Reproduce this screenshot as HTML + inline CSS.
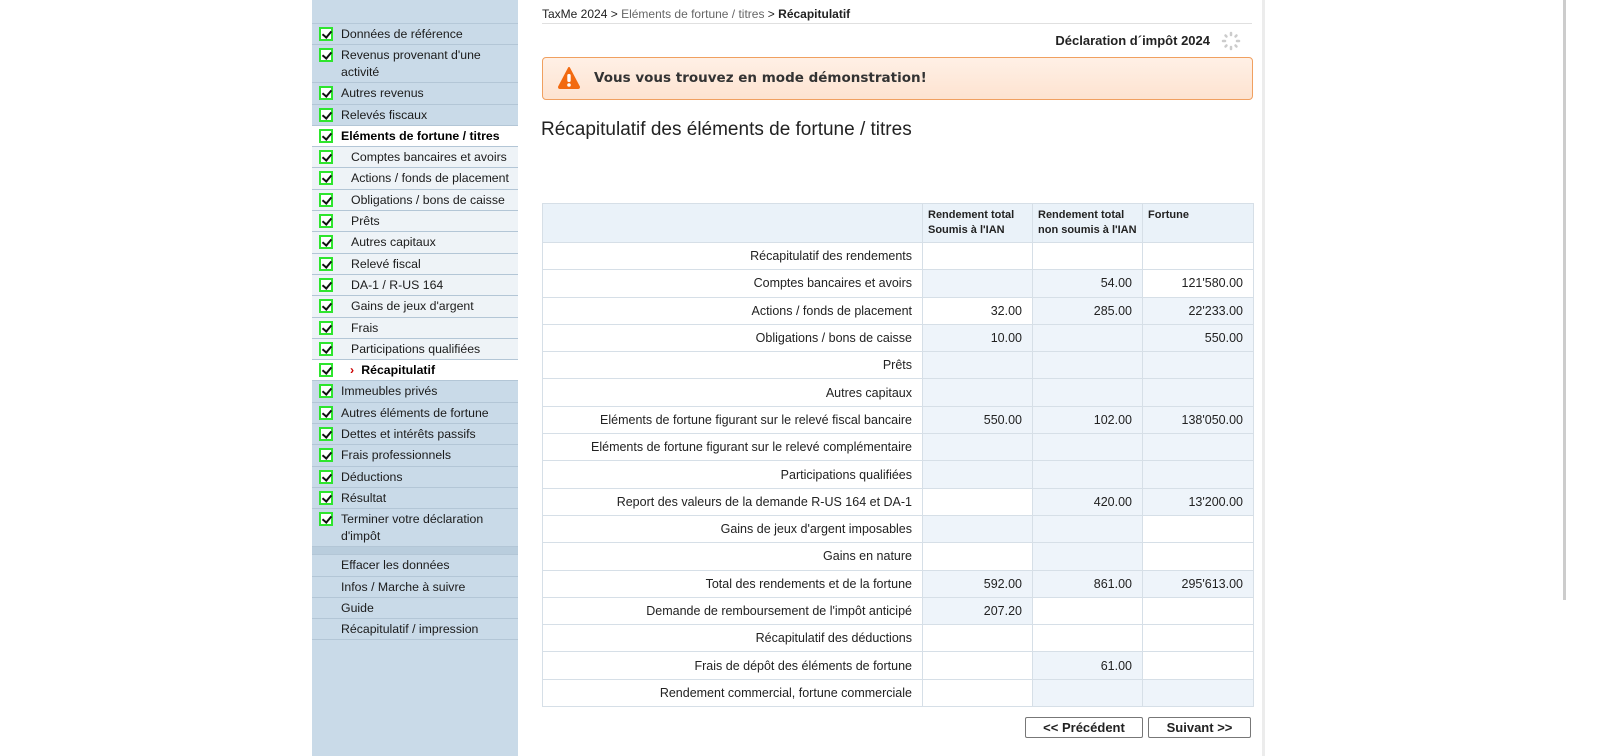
<!DOCTYPE html>
<html><head><meta charset="utf-8"><style>
*{box-sizing:border-box;margin:0;padding:0}
body{width:1600px;height:756px;overflow:hidden;background:#fff;font-family:"Liberation Sans",Arial,sans-serif;font-size:13px;color:#222;position:relative}
#side{position:absolute;left:312px;top:0;width:206px;height:756px;background:#c9dae8}
#side .top{height:24px;border-bottom:1px solid #b5c8d8}
.it{position:relative;height:21.3px;line-height:20px;border-bottom:1px solid #b3c6d6;padding-left:29px;font-size:12.3px;color:#1b1b1b;white-space:nowrap}
.it.two{height:38px;line-height:17px;padding-top:2px;white-space:normal}
.it.sel{background:#fff;font-weight:bold;color:#000}
.it.sub{background:#eef3f7;padding-left:39px}
.it.cur{background:#fff;padding-left:39px;font-weight:bold;color:#000}
.cb{position:absolute;left:7px;top:3px;width:14px;height:14px;border:2px solid #2ee52e;background:#fff}
.cb:after{content:"";position:absolute;left:3px;top:0px;width:4px;height:7px;border:solid #111;border-width:0 2px 2px 0;transform:rotate(40deg)}
.gap{height:8px;background:#b9cddd;border-bottom:1px solid #b3c6d6}
#shadow{position:absolute;left:1262px;top:0;width:3px;height:756px;background:#ececec}
#scroll{position:absolute;left:1563px;top:0;width:3px;height:600px;background:#ccc}
.crumb{position:absolute;left:542px;top:7px;font-size:12px;color:#222}
.crumb span{color:#666}
.line{position:absolute;left:542px;top:23px;width:710px;height:1px;background:#e0e0e0}
.decl{position:absolute;right:390px;top:33px;font-size:13px;font-weight:bold}
.warn{position:absolute;left:542px;top:57px;width:711px;height:43px;border:1px solid #f0a060;border-radius:4px;background:linear-gradient(#fff0e6,#fde3d0);}
.warn b{position:absolute;left:51px;top:12px;color:#333;font-family:"DejaVu Sans",sans-serif;font-size:13.5px}
h1{position:absolute;left:541px;top:119px;font-size:19px;font-weight:normal;color:#222}
table{position:absolute;left:542px;top:203px;border-collapse:collapse;width:711px;table-layout:fixed}
td{border:1px solid #d6dfe7;height:27.3px;padding:0 10px;text-align:right;font-size:12.5px}
tr.h td{height:38px;background:#eaf2f9;vertical-align:top;text-align:left;font-weight:bold;font-size:11px;padding:4px 5px;line-height:15px;white-space:nowrap;overflow:hidden}
.L{background:#eef4fa}
.btn{position:absolute;top:717px;height:21px;border:1px solid #777;border-radius:2px;background:#fff;font-weight:bold;text-align:center;line-height:19px;font-family:"Liberation Sans",sans-serif;font-size:13px}
</style></head><body>
<div id="side">
<div class="top"></div>
<div class="it"><i class="cb"></i>Données de référence</div>
<div class="it two"><i class="cb"></i>Revenus provenant d'une activité</div>
<div class="it"><i class="cb"></i>Autres revenus</div>
<div class="it"><i class="cb"></i>Relevés fiscaux</div>
<div class="it sel"><i class="cb"></i>Eléments de fortune / titres</div>
<div class="it sub"><i class="cb"></i>Comptes bancaires et avoirs</div>
<div class="it sub"><i class="cb"></i>Actions / fonds de placement</div>
<div class="it sub"><i class="cb"></i>Obligations / bons de caisse</div>
<div class="it sub"><i class="cb"></i>Prêts</div>
<div class="it sub"><i class="cb"></i>Autres capitaux</div>
<div class="it sub"><i class="cb"></i>Relevé fiscal</div>
<div class="it sub"><i class="cb"></i>DA-1 / R-US 164</div>
<div class="it sub"><i class="cb"></i>Gains de jeux d'argent</div>
<div class="it sub"><i class="cb"></i>Frais</div>
<div class="it sub"><i class="cb"></i>Participations qualifiées</div>
<div class="it cur"><i class="cb"></i><span style="color:#c00;position:absolute;left:38px">›</span>&nbsp;&nbsp; Récapitulatif</div>
<div class="it"><i class="cb"></i>Immeubles privés</div>
<div class="it"><i class="cb"></i>Autres éléments de fortune</div>
<div class="it"><i class="cb"></i>Dettes et intérêts passifs</div>
<div class="it"><i class="cb"></i>Frais professionnels</div>
<div class="it"><i class="cb"></i>Déductions</div>
<div class="it"><i class="cb"></i>Résultat</div>
<div class="it two"><i class="cb"></i>Terminer votre déclaration d'impôt</div>
<div class="gap"></div>
<div class="it">Effacer les données</div>
<div class="it">Infos / Marche à suivre</div>
<div class="it">Guide</div>
<div class="it">Récapitulatif / impression</div>
</div>
<div id="shadow"></div><div id="scroll"></div>
<div class="crumb">TaxMe 2024 &gt; <span>Eléments de fortune / titres</span> &gt; <b>Récapitulatif</b></div>
<div class="line"></div>
<div class="decl">Déclaration d´impôt 2024</div>
<svg style="position:absolute;left:1221px;top:31px" width="20" height="20" viewBox="0 0 20 20"><g stroke="#ccc" stroke-width="2.5" stroke-linecap="round"><line x1="10" y1="2" x2="10" y2="4"/><line x1="10" y1="16" x2="10" y2="18"/><line x1="2" y1="10" x2="4" y2="10"/><line x1="16" y1="10" x2="18" y2="10"/><line x1="4.5" y1="4.5" x2="5.5" y2="5.5"/><line x1="14.5" y1="14.5" x2="15.5" y2="15.5"/><line x1="4.5" y1="15.5" x2="5.5" y2="14.5"/><line x1="14.5" y1="5.5" x2="15.5" y2="4.5"/></g></svg>
<div class="warn"><svg style="position:absolute;left:15px;top:9px" width="22" height="22" viewBox="0 0 22 22"><path d="M11 1 L21 20 Q21 21 20 21 L2 21 Q1 21 1 20 Z" fill="#f26a10" stroke="#f26a10" stroke-linejoin="round" stroke-width="2"/><rect x="9.3" y="7" width="3.4" height="8" rx="1.5" fill="#fff"/><circle cx="11" cy="18" r="1.8" fill="#fff"/></svg><b>Vous vous trouvez en mode démonstration!</b></div>
<h1>Récapitulatif des éléments de fortune / titres</h1>
<table>
<colgroup><col style="width:380px"><col style="width:110px"><col style="width:110px"><col style="width:111px"></colgroup>
<tr class="h"><td></td><td>Rendement total<br>Soumis à l'IAN</td><td>Rendement total<br>non soumis à l'IAN</td><td>Fortune</td></tr>
<tr><td>Récapitulatif des rendements</td><td></td><td></td><td></td></tr>
<tr><td>Comptes bancaires et avoirs</td><td class="L"></td><td class="L">54.00</td><td>121'580.00</td></tr>
<tr><td>Actions / fonds de placement</td><td>32.00</td><td class="L">285.00</td><td class="L">22'233.00</td></tr>
<tr><td>Obligations / bons de caisse</td><td class="L">10.00</td><td class="L"></td><td class="L">550.00</td></tr>
<tr><td>Prêts</td><td class="L"></td><td class="L"></td><td class="L"></td></tr>
<tr><td>Autres capitaux</td><td class="L"></td><td class="L"></td><td class="L"></td></tr>
<tr><td>Eléments de fortune figurant sur le relevé fiscal bancaire</td><td class="L">550.00</td><td class="L">102.00</td><td class="L">138'050.00</td></tr>
<tr><td>Eléments de fortune figurant sur le relevé complémentaire</td><td class="L"></td><td class="L"></td><td class="L"></td></tr>
<tr><td>Participations qualifiées</td><td class="L"></td><td class="L"></td><td class="L"></td></tr>
<tr><td>Report des valeurs de la demande R-US 164 et DA-1</td><td></td><td class="L">420.00</td><td class="L">13'200.00</td></tr>
<tr><td>Gains de jeux d'argent imposables</td><td class="L"></td><td class="L"></td><td></td></tr>
<tr><td>Gains en nature</td><td></td><td class="L"></td><td></td></tr>
<tr><td>Total des rendements et de la fortune</td><td class="L">592.00</td><td class="L">861.00</td><td class="L">295'613.00</td></tr>
<tr><td>Demande de remboursement de l'impôt anticipé</td><td class="L">207.20</td><td></td><td></td></tr>
<tr><td>Récapitulatif des déductions</td><td></td><td></td><td></td></tr>
<tr><td>Frais de dépôt des éléments de fortune</td><td></td><td class="L">61.00</td><td></td></tr>
<tr><td>Rendement commercial, fortune commerciale</td><td></td><td class="L"></td><td class="L"></td></tr>
</table>
<div class="btn" style="left:1025px;width:118px">&lt;&lt; Précédent</div>
<div class="btn" style="left:1148px;width:103px">Suivant &gt;&gt;</div>
</body></html>
